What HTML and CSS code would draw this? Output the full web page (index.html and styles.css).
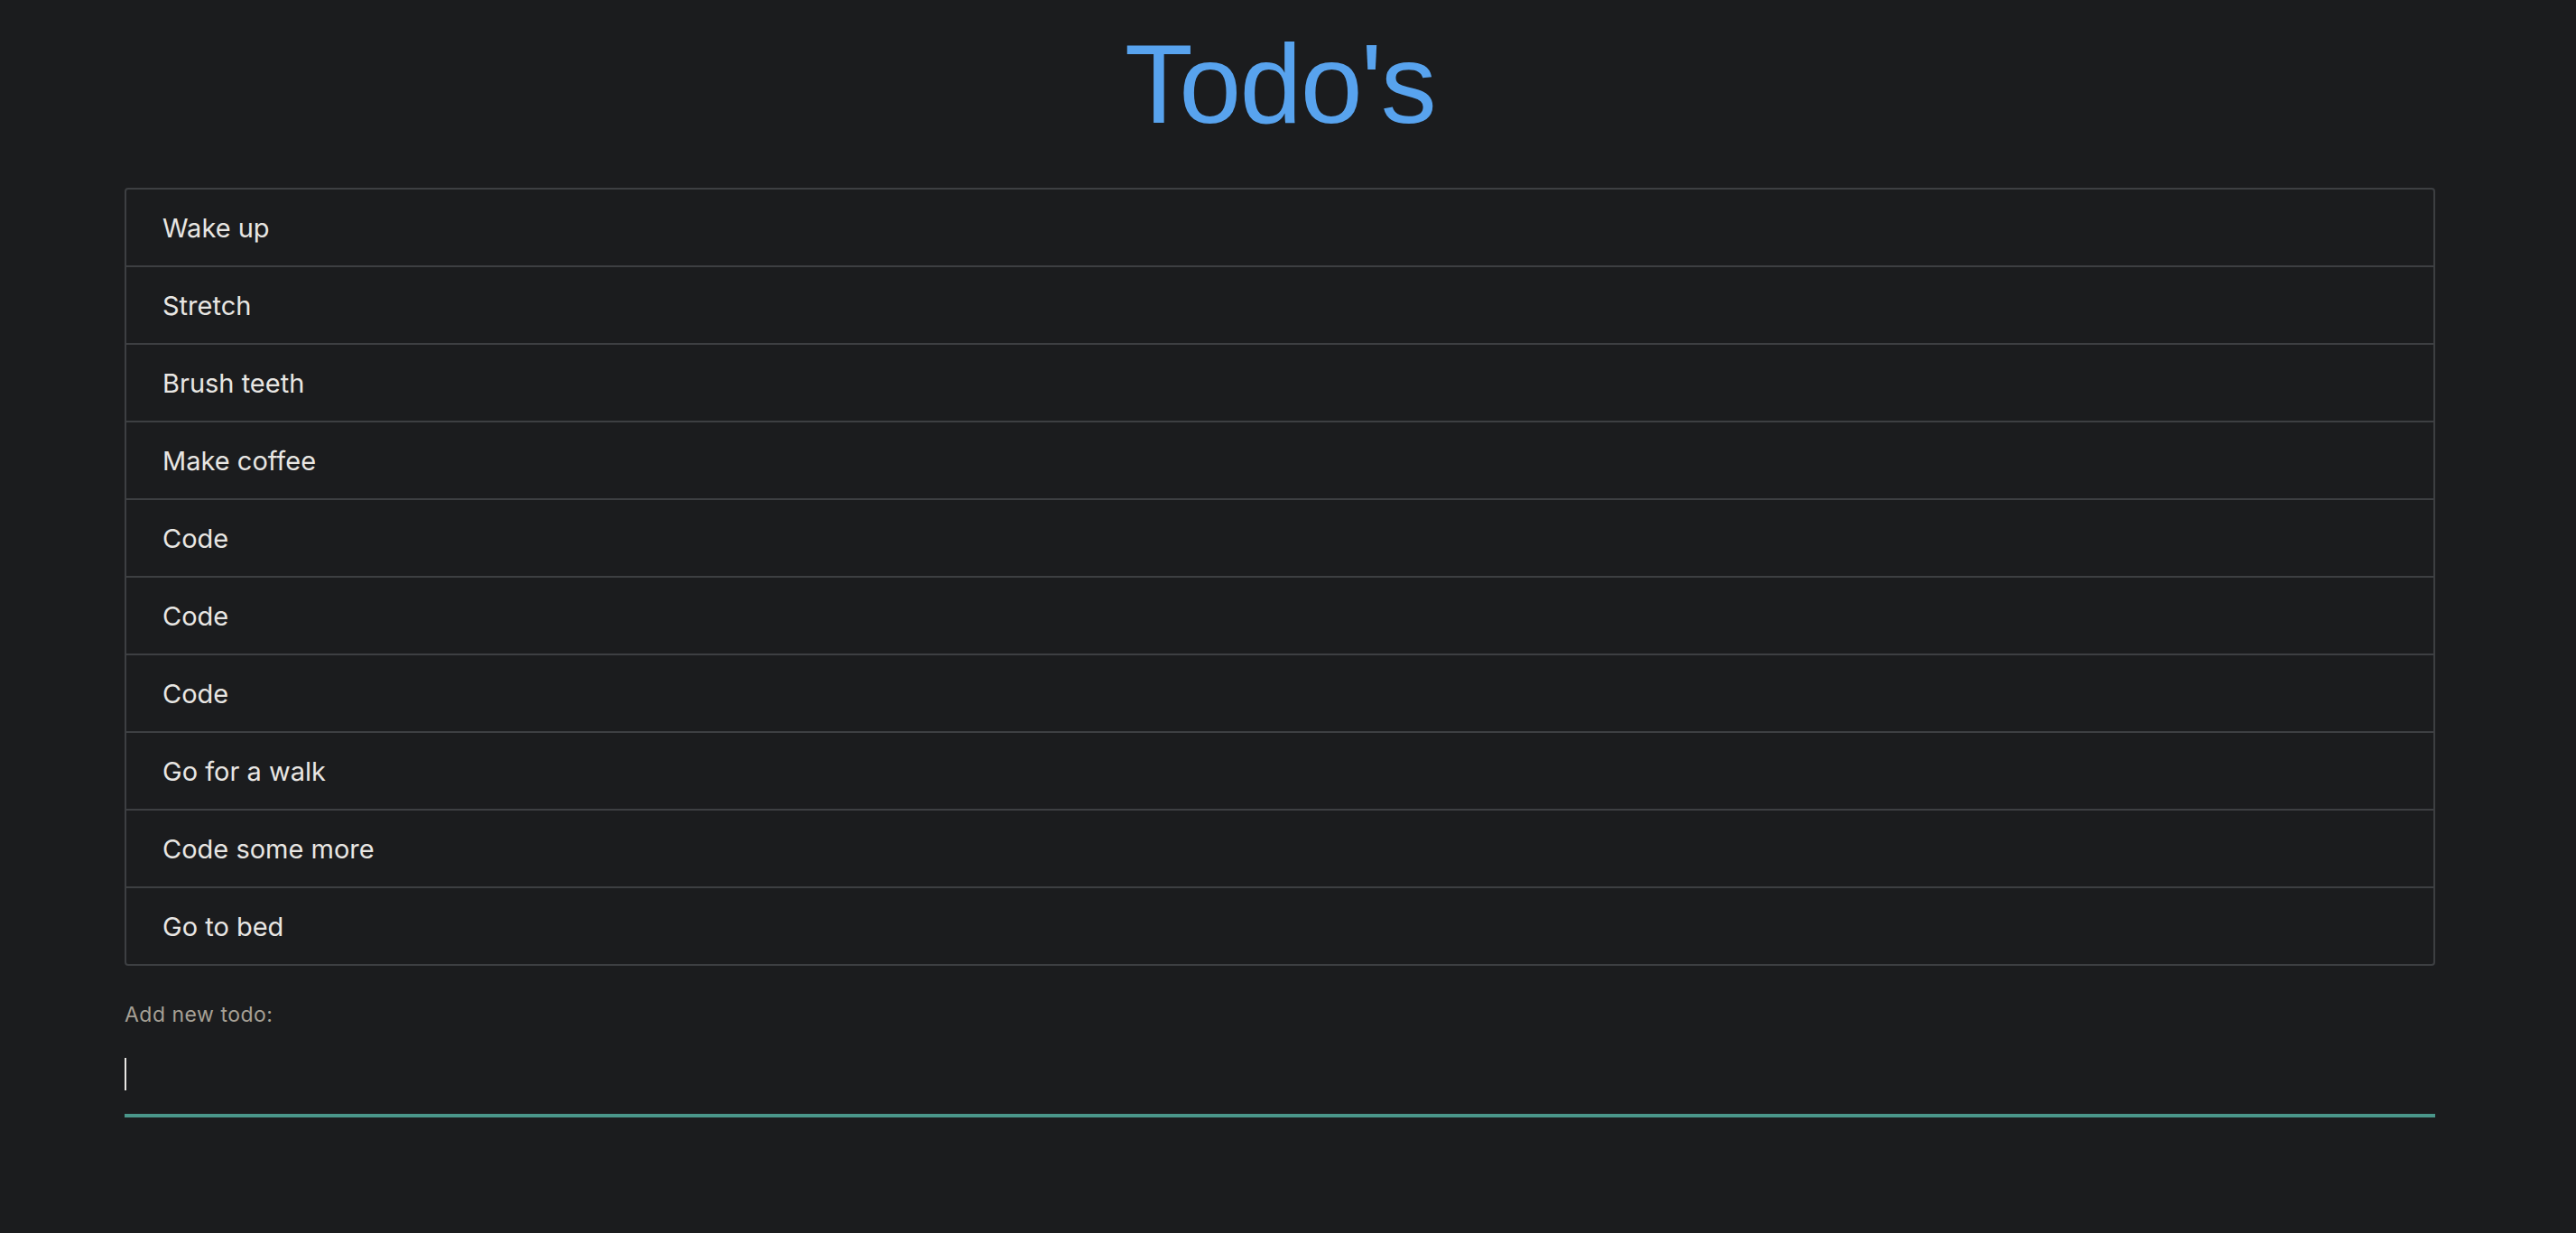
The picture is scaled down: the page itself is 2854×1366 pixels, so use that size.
FILE: index.html
```html
<!DOCTYPE html>
<html lang="en">
<head>
<meta charset="utf-8">
<title>Todo's</title>
<link rel="stylesheet" href="styles.css">
</head>
<body>
<div class="page">
  <main class="app">
    <h1 class="title">Todo's</h1>
    <ul class="todo-list">
      <li class="todo-item">Wake up</li>
      <li class="todo-item">Stretch</li>
      <li class="todo-item">Brush teeth</li>
      <li class="todo-item">Make coffee</li>
      <li class="todo-item">Code</li>
      <li class="todo-item">Code</li>
      <li class="todo-item">Code</li>
      <li class="todo-item">Go for a walk</li>
      <li class="todo-item">Code some more</li>
      <li class="todo-item">Go to bed</li>
    </ul>
    <form class="add-form">
      <label class="add-label" for="new-todo">Add new todo:</label>
      <div class="input-wrap">
        <input class="add-input" id="new-todo" type="text">
        <span class="caret"></span>
      </div>
    </form>
  </main>
</div>
</body>
</html>
```
FILE: styles.css
```css
html, body {
  margin: 0;
  padding: 0;
  background: #1b1c1e;
}
body {
  font-family: Inter, "Noto Sans", sans-serif;
  color: #e8e6e3;
}
.page {
  width: 2836px;
  display: flex;
  justify-content: center;
}
.app {
  width: 2560px;
  display: flex;
  flex-direction: column;
}
.title {
  margin: 31px 0 0 0;
  font-family: "Liberation Sans", Arial, sans-serif;
  font-weight: 400;
  font-size: 124px;
  line-height: 1;
  letter-spacing: -1.8px;
  text-align: center;
  color: #58a3ee;
}
.todo-list {
  list-style: none;
  margin: 53px 0 0 0;
  padding: 0;
  border: 2px solid #3d3f42;
  border-radius: 4px;
}
.todo-item {
  height: 84px;
  display: flex;
  align-items: center;
  padding: 0 40px;
  font-size: 29px;
  color: #e8e6e3;
}
.todo-item + .todo-item {
  border-top: 2px solid #3d3f42;
}
.add-form {
  margin-top: 43px;
  display: flex;
  flex-direction: column;
}
.add-label {
  font-size: 23px;
  line-height: 1;
  color: #a6a095;
  letter-spacing: 0.5px;
}
.input-wrap {
  position: relative;
  margin-top: 14px;
}
.add-input {
  display: block;
  box-sizing: content-box;
  width: 100%;
  height: 84px;
  margin: 0;
  padding: 0;
  border: none;
  border-bottom: 4px solid #4a968a;
  background: transparent;
  color: #e8e6e3;
  font-family: Inter, sans-serif;
  font-size: 29px;
  outline: none;
}
.caret {
  position: absolute;
  left: 0;
  top: 22px;
  width: 2px;
  height: 36px;
  background: #e8e6e3;
}
```
